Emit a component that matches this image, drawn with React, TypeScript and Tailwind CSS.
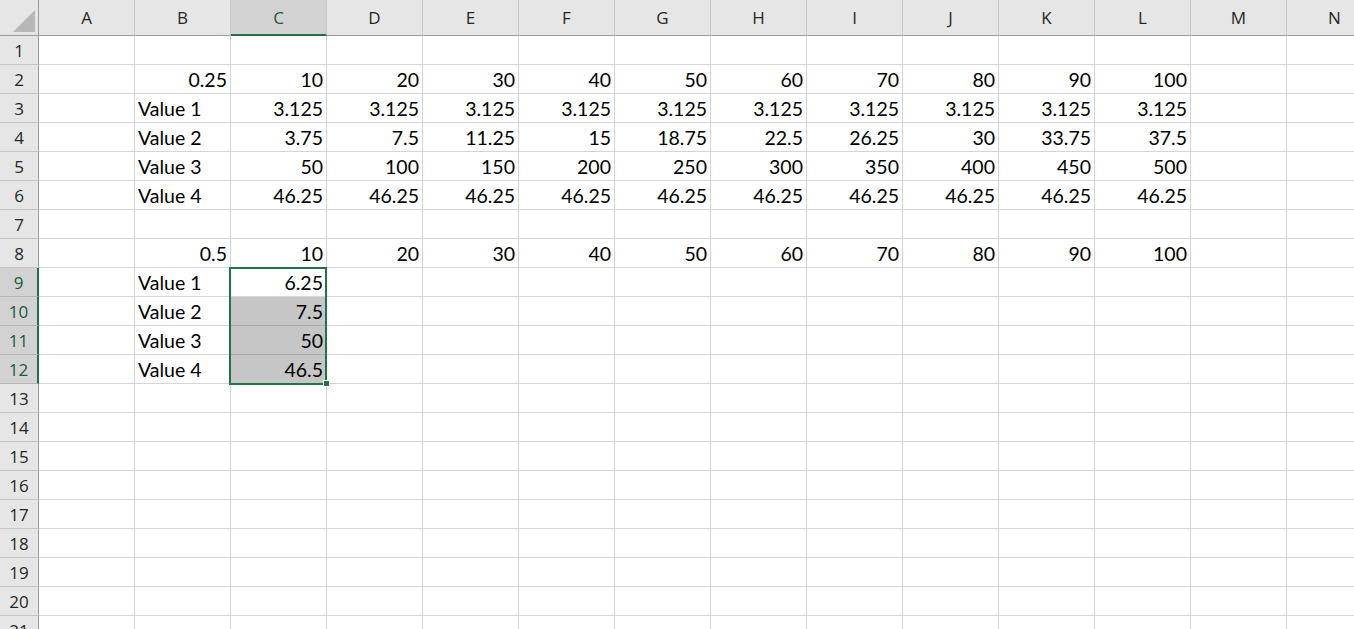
import React from "react";

const COLS = ["A", "B", "C", "D", "E", "F", "G", "H", "I", "J", "K", "L", "M", "N"];
const ROW_COUNT = 21;

const cells: Record<string, string> = {};
const put = (row: number, start: string, values: (string | number)[]) => {
  const s = COLS.indexOf(start);
  values.forEach((v, i) => {
    cells[`${COLS[s + i]}${row}`] = String(v);
  });
};

put(2, "B", [0.25, 10, 20, 30, 40, 50, 60, 70, 80, 90, 100]);
put(3, "B", ["Value 1", ...Array(10).fill("3.125")]);
put(4, "B", ["Value 2", 3.75, 7.5, 11.25, 15, 18.75, 22.5, 26.25, 30, 33.75, 37.5]);
put(5, "B", ["Value 3", 50, 100, 150, 200, 250, 300, 350, 400, 450, 500]);
put(6, "B", ["Value 4", ...Array(10).fill("46.25")]);
put(8, "B", [0.5, 10, 20, 30, 40, 50, 60, 70, 80, 90, 100]);
put(9, "B", ["Value 1", 6.25]);
put(10, "B", ["Value 2", 7.5]);
put(11, "B", ["Value 3", 50]);
put(12, "B", ["Value 4", 46.5]);

const selectedRows = [9, 10, 11, 12];
const isNum = (v: string) => v !== "" && !isNaN(Number(v));

export default function App() {
  return (
    <div className="w-[1354px] h-[629px] overflow-hidden bg-white select-none">
      <div className="relative w-max">
        {/* column header strip */}
        <div className="flex h-[36px] bg-[#e6e6e6]">
          <div className="relative w-[39px] shrink-0 border-r border-b border-[#9b9b9b]">
            <svg className="absolute right-[3px] bottom-[3px]" width="22" height="22" viewBox="0 0 22 22">
              <polygon points="22,0 22,22 0,22" fill="#b7b7b7" />
            </svg>
          </div>
          {COLS.map((c) => {
            const active = c === "C";
            return (
              <div
                key={c}
                className={`w-[96px] shrink-0 flex items-center justify-center pt-[1px] text-[17px] font-['Open_Sans',sans-serif] border-r border-[#c9c9c9] ${
                  active
                    ? "bg-[#d2d2d2] text-[#1e5a38] border-b-2 border-b-[#217346]"
                    : "text-[#262626] border-b border-b-[#9b9b9b]"
                }`}
              >
                {c}
              </div>
            );
          })}
        </div>

        {/* rows */}
        {Array.from({ length: ROW_COUNT }, (_, i) => i + 1).map((r) => {
          const sel = selectedRows.includes(r);
          return (
            <div key={r} className="flex h-[29px]">
              <div
                className={`w-[39px] shrink-0 flex items-center justify-center pt-[2px] text-[17px] font-['Open_Sans',sans-serif] border-b ${
                  sel
                    ? "bg-[#d2d2d2] text-[#1e5a38] border-b-[#b5b5b5] border-r-2 border-r-[#217346]"
                    : "bg-[#e6e6e6] text-[#262626] border-b-[#c4c4c4] border-r border-r-[#9b9b9b]"
                }`}
              >
                {r}
              </div>
              {COLS.map((c) => {
                const v = cells[`${c}${r}`] ?? "";
                const shaded = c === "C" && r >= 10 && r <= 12;
                return (
                  <div
                    key={c}
                    className={`w-[96px] shrink-0 flex items-center px-[3px] pt-[2px] text-[19.5px] text-black font-['Lato',sans-serif] border-r border-b border-[#d4d4d4] ${
                      isNum(v) ? "justify-end" : "justify-start"
                    } ${shaded ? "bg-[#c6c6c6] border-b-[#a9a9a9]" : ""}`}
                  >
                    {v}
                  </div>
                );
              })}
            </div>
          );
        })}

        {/* selection frame C9:C12 with fill handle */}
        <div className="absolute left-[229px] top-[267px] w-[98px] h-[118px] border-2 border-[#217346] pointer-events-none" />
        <div className="absolute left-[323px] top-[380px] w-[7px] h-[7px] bg-[#217346] border border-white" />
      </div>
    </div>
  );
}
